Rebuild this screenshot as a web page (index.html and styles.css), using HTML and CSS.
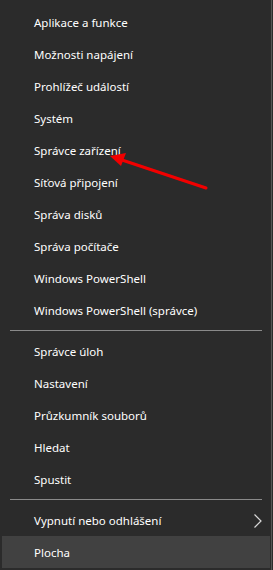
FILE: index.html
```html
<!DOCTYPE html>
<html lang="cs">
<head>
  <meta charset="UTF-8" />
  <meta name="viewport" content="width=device-width,initial-scale=1"/>
  <title>Nabídka Win+X</title>
  <link rel="stylesheet" href="styles.css">
</head>
<body>
  <div class="menu">
    <ul class="menu-group">
      <li class="item">Aplikace a funkce</li>
      <li class="item">Možnosti napájení</li>
      <li class="item">Prohlížeč událostí</li>
      <li class="item">Systém</li>
      <li class="item">Správce zařízení</li>
      <li class="item">Síťová připojení</li>
      <li class="item">Správa disků</li>
      <li class="item">Správa počítače</li>
      <li class="item">Windows PowerShell</li>
      <li class="item">Windows PowerShell (správce)</li>
    </ul>
    <div class="separator"></div>
    <ul class="menu-group">
      <li class="item">Správce úloh</li>
      <li class="item">Nastavení</li>
      <li class="item">Průzkumník souborů</li>
      <li class="item">Hledat</li>
      <li class="item">Spustit</li>
    </ul>
    <div class="separator"></div>
    <ul class="menu-group">
      <li class="item has-sub">
        <span>Vypnutí nebo odhlášení</span>
        <svg class="chevron" width="8" height="14" viewBox="0 0 8 14">
          <polyline points="0.5,0.5 7,7 0.5,13.5" fill="none" stroke="#d8d8d8" stroke-width="1.2"/>
        </svg>
      </li>
      <li class="item active">Plocha</li>
    </ul>

    <!-- red annotation arrow pointing at "Správce zařízení" -->
    <svg class="annotation" width="273" height="570" viewBox="0 0 273 570">
      <line x1="206" y1="188" x2="122" y2="160" stroke="#f20000" stroke-width="3" stroke-linecap="round"/>
      <polygon points="110,156 126,153 121,166" fill="#f20000"/>
    </svg>
  </div>
</body>
</html>
```

FILE: styles.css
```css
body {
  margin: 0;
  background-color: #2b2b2b;
  font-family: "Noto Sans", "Open Sans", sans-serif;
  font-size: 11.5px;
  color: #ffffff;
}

.menu {
  position: relative;
  width: 272px;
  height: 570px;
  box-sizing: border-box;
  padding: 6px 1px 2px 2px;
  background-color: #2b2b2b;
  border-right: 1px solid #555555;
}

.menu-group {
  list-style: none;
  margin: 0;
  padding: 0;
}

.item {
  display: flex;
  align-items: center;
  justify-content: space-between;
  height: 32px;
  padding: 0 8px 0 32px;
  box-sizing: border-box;
  white-space: nowrap;
}

.item.active {
  background-color: #414141;
}

.chevron {
  display: block;
  margin-top: 1px;
}

.separator {
  height: 1px;
  margin: 4px 8px;
  background-color: #8a8a8a;
}

.annotation {
  position: absolute;
  top: 0;
  left: 0;
  pointer-events: none;
}
```
